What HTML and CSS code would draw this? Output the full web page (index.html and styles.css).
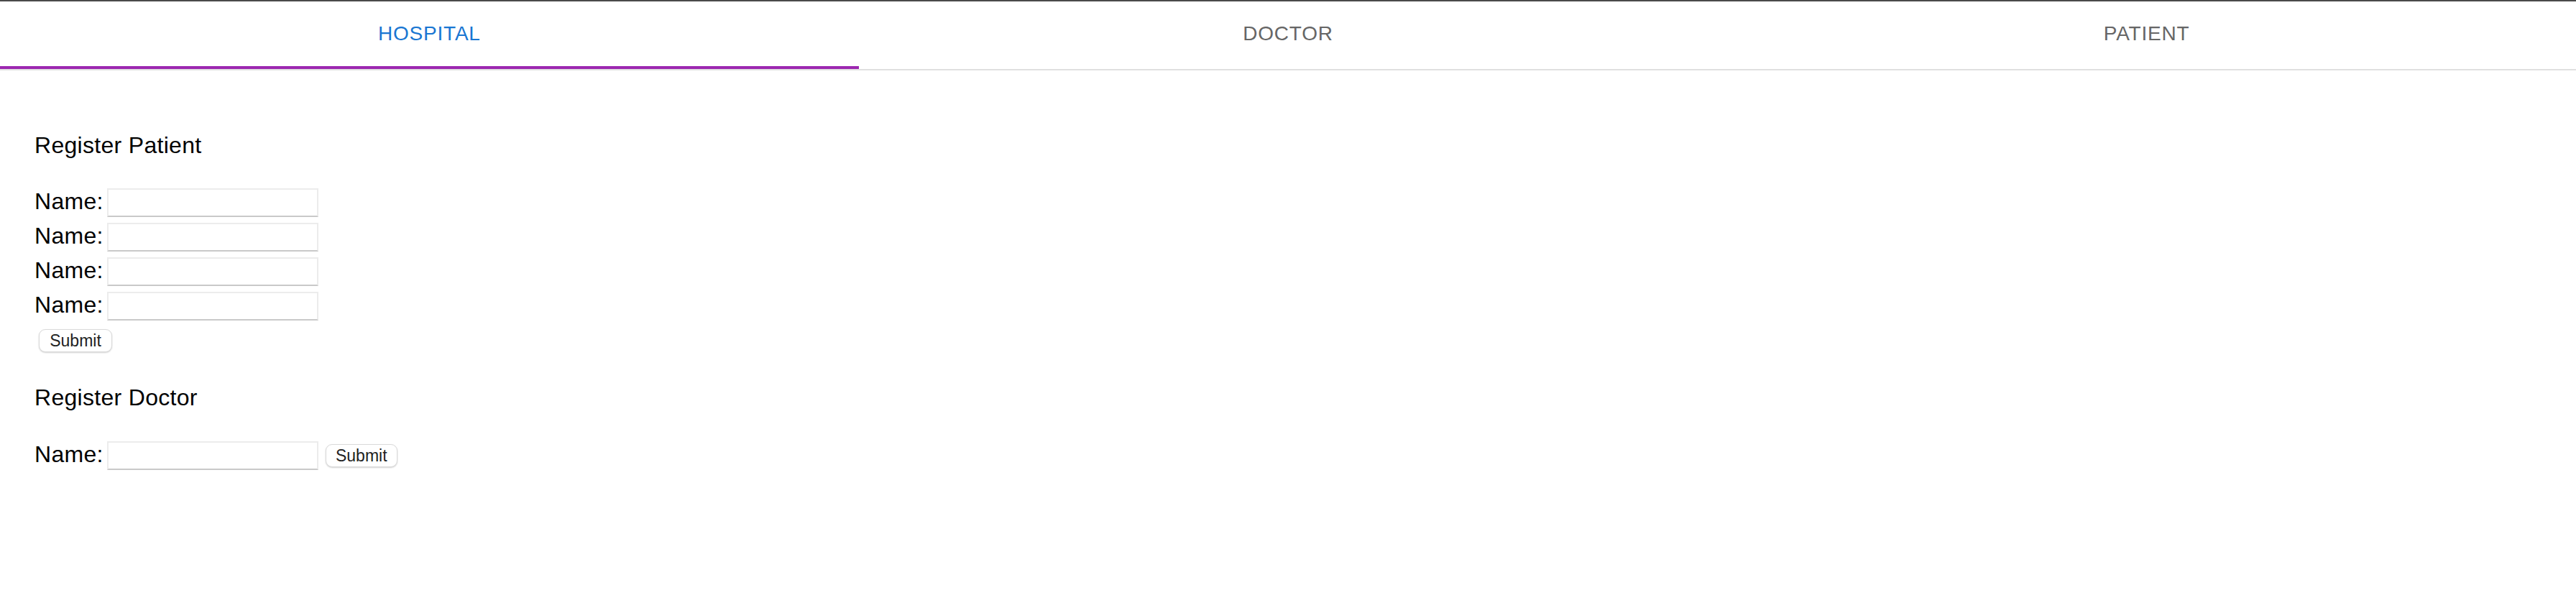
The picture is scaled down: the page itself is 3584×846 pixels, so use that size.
FILE: index.html
```html
<!DOCTYPE html>
<html lang="en">
<head>
<meta charset="utf-8">
<title>Hospital</title>
<link rel="stylesheet" href="styles.css">
</head>
<body>
<div class="topline"></div>
<nav class="tabs">
  <div class="tab active"><span class="tab-label">HOSPITAL</span></div>
  <div class="tab"><span class="tab-label">DOCTOR</span></div>
  <div class="tab"><span class="tab-label">PATIENT</span></div>
</nav>
<main class="panel">
  <section class="block patient">
    <div class="heading">Register Patient</div>
    <form class="form">
      <div class="row"><label class="label">Name:</label><input class="field" type="text"></div>
      <div class="row"><label class="label">Name:</label><input class="field" type="text"></div>
      <div class="row"><label class="label">Name:</label><input class="field" type="text"></div>
      <div class="row"><label class="label">Name:</label><input class="field" type="text"></div>
      <button class="btn btn-below" type="button">Submit</button>
    </form>
  </section>
  <section class="block doctor">
    <div class="heading">Register Doctor</div>
    <form class="form">
      <div class="row"><label class="label">Name:</label><input class="field" type="text"><button class="btn btn-inline" type="button">Submit</button></div>
    </form>
  </section>
</main>
</body>
</html>
```
FILE: styles.css
```css
html, body {
  margin: 0;
  padding: 0;
  background: #ffffff;
}
body {
  font-family: "Liberation Sans", Arial, Helvetica, sans-serif;
  color: #000;
}
.topline {
  height: 2px;
  background: #4a4a4a;
}
.tabs {
  display: grid;
  grid-template-columns: 1fr 1fr 1fr;
  border-bottom: 2px solid #e0e0e0;
}
.tab {
  height: 94px;
  box-sizing: border-box;
  display: flex;
  align-items: center;
  justify-content: center;
  padding-bottom: 2px;
  border-bottom: 4px solid transparent;
  color: #666666;
  font-size: 28px;
  font-weight: 500;
  letter-spacing: 0.8px;
  line-height: 35px;
}
.tab.active {
  color: #1976d2;
  border-bottom-color: #9c27b0;
}
.panel {
  padding: 0 48px;
}
.heading {
  font-size: 32px;
  letter-spacing: 0.3px;
  line-height: 40px;
  height: 40px;
}
.patient {
  padding-top: 84px;
}
.doctor {
  padding-top: 43px;
}
.form {
  margin: 38px 0 0 0;
  display: flex;
  flex-direction: column;
  align-items: flex-start;
}
.doctor .form {
  margin-top: 39px;
}
.row {
  display: flex;
  align-items: flex-start;
  height: 48px;
}
.label {
  font-size: 32px;
  letter-spacing: 0.3px;
  line-height: 40px;
  margin-right: 5px;
}
.field {
  width: 294px;
  height: 40px;
  box-sizing: border-box;
  margin: 2px 0 0 0;
  padding: 0 6px;
  border: 2px solid #ececec;
  border-bottom: 2px solid #c9c9c9;
  background: #fff;
  font-size: 26px;
  outline: none;
}
.btn {
  width: 102px;
  height: 32px;
  box-sizing: border-box;
  padding: 0;
  font-family: "Liberation Sans", Arial, Helvetica, sans-serif;
  font-size: 23px;
  color: #222;
  background: #ffffff;
  border: 1px solid #dadada;
  border-radius: 9px;
  box-shadow: 0 1px 2px rgba(0, 0, 0, 0.18);
}
.btn-below {
  margin: 6px 0 0 6px;
}
.btn-inline {
  width: 100px;
  margin: 6px 0 0 10px;
}
```
